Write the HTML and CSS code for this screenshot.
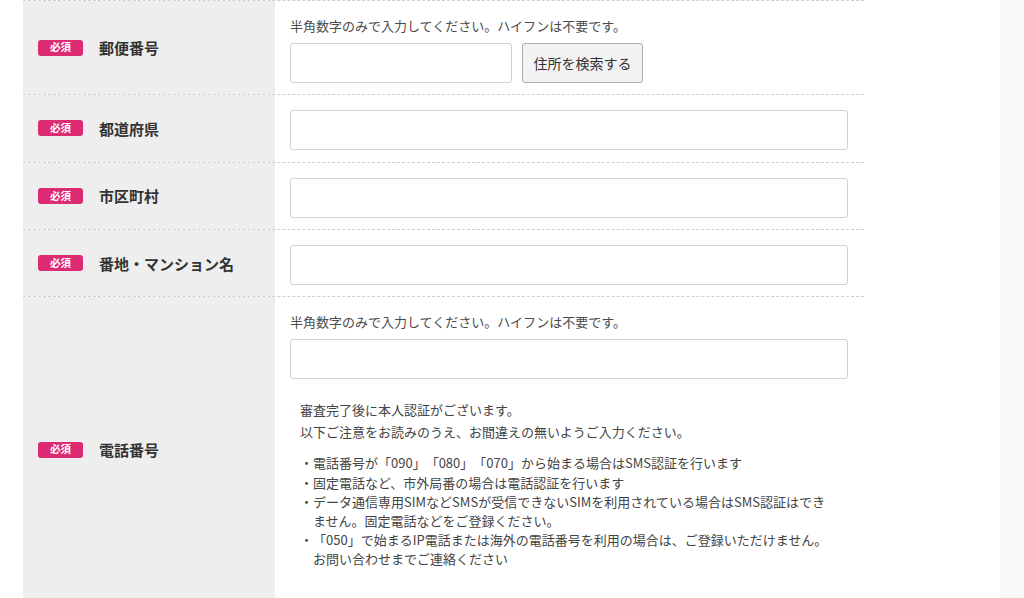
FILE: index.html
```html
<!DOCTYPE html>
<html lang="ja">
<head>
<meta charset="utf-8">
<title>お客様情報入力</title>
<link rel="stylesheet" href="styles.css">
</head>
<body>
<div class="page">
  <main class="main">
    <div class="form">
      <div class="row">
        <div class="th"><span class="req">必須</span><span class="label">郵便番号</span></div>
        <div class="td">
          <p class="hint">半角数字のみで入力してください。ハイフンは不要です。</p>
          <div class="zip">
            <input class="input input-zip" type="text">
            <button class="btn" type="button">住所を検索する</button>
          </div>
        </div>
      </div>
      <div class="row">
        <div class="th"><span class="req">必須</span><span class="label">都道府県</span></div>
        <div class="td"><input class="input" type="text"></div>
      </div>
      <div class="row">
        <div class="th"><span class="req">必須</span><span class="label">市区町村</span></div>
        <div class="td"><input class="input" type="text"></div>
      </div>
      <div class="row">
        <div class="th"><span class="req">必須</span><span class="label">番地・マンション名</span></div>
        <div class="td"><input class="input" type="text"></div>
      </div>
      <div class="row">
        <div class="th"><span class="req">必須</span><span class="label">電話番号</span></div>
        <div class="td">
          <p class="hint">半角数字のみで入力してください。ハイフンは不要です。</p>
          <input class="input" type="text">
          <div class="notice">
            <p class="notice-lead">審査完了後に本人認証がございます。<br>以下ご注意をお読みのうえ、お間違えの無いようご入力ください。</p>
            <ul class="notice-list">
              <li>・電話番号が「090」「080」「070」から始まる場合はSMS認証を行います</li>
              <li>・固定電話など、市外局番の場合は電話認証を行います</li>
              <li>・データ通信専用SIMなどSMSが受信できないSIMを利用されている場合はSMS認証はでき<br>ません。固定電話などをご登録ください。</li>
              <li>・「050」で始まるIP電話または海外の電話番号を利用の場合は、ご登録いただけません。<br>お問い合わせまでご連絡ください</li>
            </ul>
          </div>
        </div>
      </div>
    </div>
  </main>
  <aside class="side"></aside>
</div>
</body>
</html>
```

FILE: styles.css
```css
html, body {
  margin: 0;
  padding: 0;
  overflow: hidden;
  background: #ffffff;
}

body {
  font-family: "Noto Sans CJK JP", "Noto Sans", sans-serif;
  color: #333333;
  text-spacing-trim: space-all;
}

.page {
  display: flex;
  min-height: 598px;
}

.main {
  width: 1000px;
  padding-left: 23px;
  box-sizing: border-box;
}

.side {
  flex: 1;
  background: #f8f8f8;
}

.form {
  width: 841px;
  border-top: 1px dashed #cfcfcf;
}

.row {
  display: grid;
  grid-template-columns: 252px 1fr;
  border-bottom: 1px dashed #cfcfcf;
}

.th {
  background: #eeeeee;
  display: flex;
  align-items: center;
  padding-left: 15px;
}

.req {
  display: inline-flex;
  align-items: center;
  justify-content: center;
  width: 45px;
  height: 16px;
  border-radius: 3px;
  background: #dc2a73;
  color: #ffffff;
  font-size: 10.5px;
  font-weight: 700;
  line-height: 1;
  margin-right: 16px;
}

.label {
  font-size: 15px;
  font-weight: 700;
  color: #333333;
}

.td {
  padding: 15px 16px 11.33px 15px;
}

.hint {
  margin: 0 0 8px;
  font-size: 13px;
  line-height: 19px;
  color: #4a4a4a;
}

.input {
  display: block;
  width: 100%;
  height: 40px;
  box-sizing: border-box;
  border: 1px solid #d3d3d3;
  border-radius: 3px;
  background: #ffffff;
  margin: 0;
  padding: 0 10px;
  font-family: inherit;
  font-size: 14px;
}

.zip {
  display: flex;
  gap: 10px;
}

.input-zip {
  width: 222px;
}

.btn {
  width: 121px;
  height: 40px;
  box-sizing: border-box;
  border: 1px solid #adadad;
  border-radius: 3px;
  background: #f2f2f2;
  color: #333333;
  font-family: inherit;
  font-size: 14px;
  padding: 0;
}

.notice {
  padding: 20px 10px 22px;
  color: #444444;
  font-size: 13px;
}

.notice-lead {
  margin: 0;
  line-height: 22px;
}

.notice-list {
  list-style: none;
  margin: 10px 0 0;
  padding: 0;
  line-height: 19.24px;
}

.notice-list li {
  padding-left: 13px;
  text-indent: -13px;
  white-space: nowrap;
}
```
